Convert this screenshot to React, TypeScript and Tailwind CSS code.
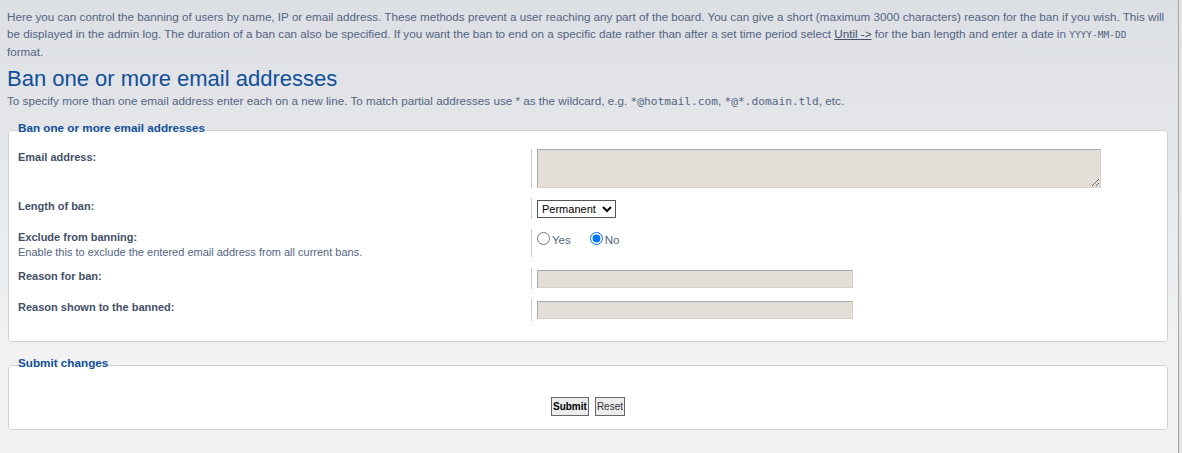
import React from 'react';

const Row: React.FC<{ label: string; desc?: string; children: React.ReactNode; h: string }> = ({ label, desc, children, h }) => (
  <div className="flex mb-[10px]">
    <div className="w-[513px] shrink-0">
      <div className="text-[11px] leading-[17px] font-bold text-[#425067]">{label}</div>
      {desc && <div className="text-[11px] leading-[12px] text-[#536482]">{desc}</div>}
    </div>
    <div className={`${h} flex items-center border-l border-[#cccccc] pl-[5px]`}>{children}</div>
  </div>
);

const inputCls =
  'block bg-[#e3dfd8] border border-t-[#a9a9a9] border-l-[#a9a9a9] border-r-[#d2d2c8] border-b-[#d2d2c8]';

const mono = "font-['DejaVu_Sans_Mono',monospace]";

const App: React.FC = () => {
  return (
    <div className="flex min-h-[453px] font-['Liberation_Sans',Arial,sans-serif]">
      <div className="w-[1179px] shrink-0 border-r border-[#a3a3a3] bg-linear-to-b from-[#dcdfe4] to-[#f2f2f2] to-80% pl-[7px] pr-[10px] pt-[8px] pb-[22px]">
        <p className="text-[11.67px] leading-[17px] text-[#536482]">
          Here you can control the banning of users by name, IP or email address. These methods prevent a user reaching any
          part of the board. You can give a short (maximum 3000 characters) reason for the ban if you wish. This will
          <br />
          be displayed in the admin log. The duration of a ban can also be specified. If you want the ban to end on a specific
          date rather than after a set time period select <span className="underline text-[#425067]">Until -&gt;</span> for
          the ban length and enter a date in <span className={`${mono} text-[9.5px]`}>YYYY-MM-DD</span>
          <br />
          format.
        </p>
        <h1 className="mt-[6px] text-[22px] leading-[26px] text-[#115098]">Ban one or more email addresses</h1>
        <p className="text-[11.7px] leading-[17px] text-[#536482]">
          To specify more than one email address enter each on a new line. To match partial addresses use * as the wildcard,
          e.g. <span className={`${mono} text-[11.2px]`}>*@hotmail.com</span>,{' '}
          <span className={`${mono} text-[11.2px]`}>*@*.domain.tld</span>, etc.
        </p>

        <fieldset className="mt-[11px] ml-[1px] w-[1160px] rounded-[4px] border border-[#d0d0d0] bg-white pl-[9px] pt-[9px] pb-[10px]">
          <legend className="pb-[6px] text-[11.7px] leading-[13px] font-bold text-[#115098]">Ban one or more email addresses</legend>
          <Row label="Email address:" h="h-[39px]">
            <textarea className={`${inputCls} w-[564px] h-[39px]`} />
          </Row>
          <Row label="Length of ban:" h="h-[21px]">
            <select className="h-[18px] w-[79px] border border-[#555555] bg-white text-[11px] text-black">
              <option>Permanent</option>
            </select>
          </Row>
          <Row
            label="Exclude from banning:"
            desc="Enable this to exclude the entered email address from all current bans."
            h="h-[28px] !items-start pt-[3px]"
          >
            <label className="flex items-start text-[11.5px] text-[#536482]">
              <input type="radio" name="ex" className="m-0 mr-[2px] h-[13px] w-[13px]" />
              <span className="mt-[2px] leading-[13px]">Yes</span>
            </label>
            <label className="ml-[19px] flex items-start text-[11.5px] text-[#536482]">
              <input type="radio" name="ex" defaultChecked className="m-0 mr-[2px] h-[13px] w-[13px]" />
              <span className="mt-[2px] leading-[13px]">No</span>
            </label>
          </Row>
          <Row label="Reason for ban:" h="h-[21px]">
            <input className={`${inputCls} w-[316px] h-[18px]`} />
          </Row>
          <Row label="Reason shown to the banned:" h="h-[22px]">
            <input className={`${inputCls} w-[316px] h-[18px]`} />
          </Row>
        </fieldset>

        <fieldset className="mt-[14px] ml-[1px] w-[1160px] rounded-[4px] border border-[#d0d0d0] bg-white pl-[9px] pt-[22px] pb-[13px]">
          <legend className="pb-[6px] text-[11.7px] leading-[13px] font-bold text-[#115098]">Submit changes</legend>
          <div className="flex justify-center gap-[6px] pr-[9px]">
            <button className="h-[19px] border border-[#666666] bg-[#ececec] px-[1px] text-[10px] font-bold text-black">Submit</button>
            <button className="h-[19px] border border-[#666666] bg-[#ececec] px-[1px] text-[10px] text-[#333333]">Reset</button>
          </div>
        </fieldset>
      </div>
      <div className="flex-1 bg-[#e4e4e4]" />
    </div>
  );
};

export default App;
